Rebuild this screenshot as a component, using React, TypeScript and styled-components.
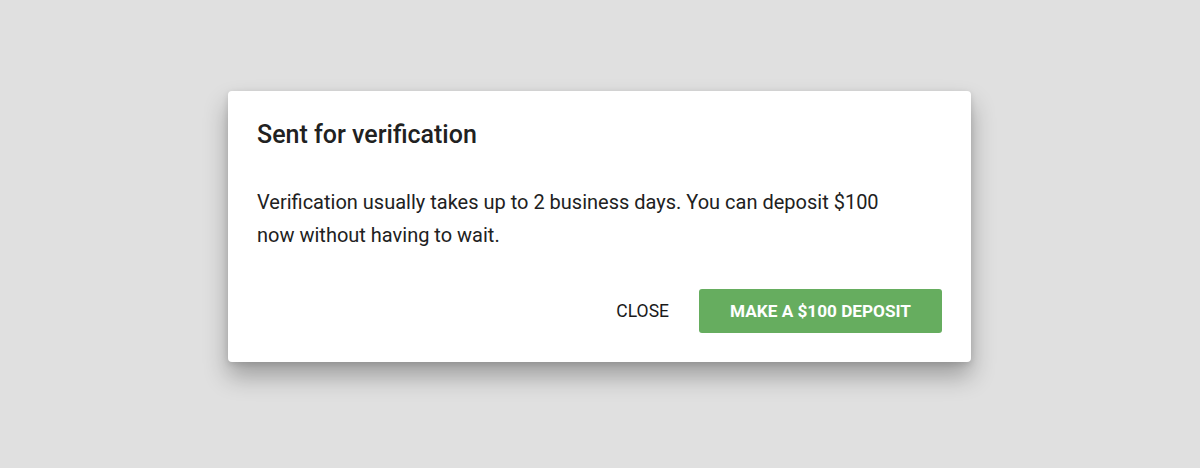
import React from "react";
import { styled, createGlobalStyle } from "styled-components";

const GlobalStyle = createGlobalStyle`
  html, body {
    margin: 0;
    padding: 0;
    background: #e0e0e0;
    font-family: Roboto, "Liberation Sans", sans-serif;
  }
`;

export default function App() {
  return (
    <>
      <GlobalStyle />
      <Page>
        <Dialog>
          <Title>Sent for verification</Title>
          <Body>
            Verification usually takes up to 2 business days. You can deposit
            $100 now without having to wait.
          </Body>
          <Actions>
            <TextButton>Close</TextButton>
            <PrimaryButton>Make a $100 deposit</PrimaryButton>
          </Actions>
        </Dialog>
      </Page>
    </>
  );
}

const Page = styled.div`
  width: 1199px;
  height: 468px;
  display: flex;
  justify-content: center;
  padding-top: 91px;
  box-sizing: border-box;
`;

const Dialog = styled.div`
  width: 743px;
  height: 271px;
  box-sizing: border-box;
  background: #fff;
  border-radius: 4px;
  padding: 28px 29px 29px;
  box-shadow: 0 14px 24px rgba(0, 0, 0, 0.3), 0 2px 6px rgba(0, 0, 0, 0.12);
  display: flex;
  flex-direction: column;
`;

const Title = styled.h2`
  margin: 0;
  font-size: 25px;
  line-height: 32px;
  font-weight: 500;
  color: #212121;
`;

const Body = styled.p`
  margin: 35px 0 0;
  max-width: 630px;
  font-size: 20px;
  line-height: 33px;
  color: #212121;
`;

const Actions = styled.div`
  margin-top: auto;
  display: flex;
  justify-content: flex-end;
  align-items: center;
  gap: 14px;
`;

const TextButton = styled.button`
  border: none;
  background: transparent;
  font-family: inherit;
  font-size: 17.5px;
  font-weight: 400;
  text-transform: uppercase;
  color: #1a1a1a;
  padding: 0 16px;
  height: 44px;
  cursor: pointer;
`;

const PrimaryButton = styled.button`
  border: none;
  background: #66ad5f;
  color: #fff;
  font-family: inherit;
  font-size: 17.2px;
  font-weight: 700;
  text-transform: uppercase;
  height: 44px;
  width: 243px;
  border-radius: 3px;
  cursor: pointer;
`;
